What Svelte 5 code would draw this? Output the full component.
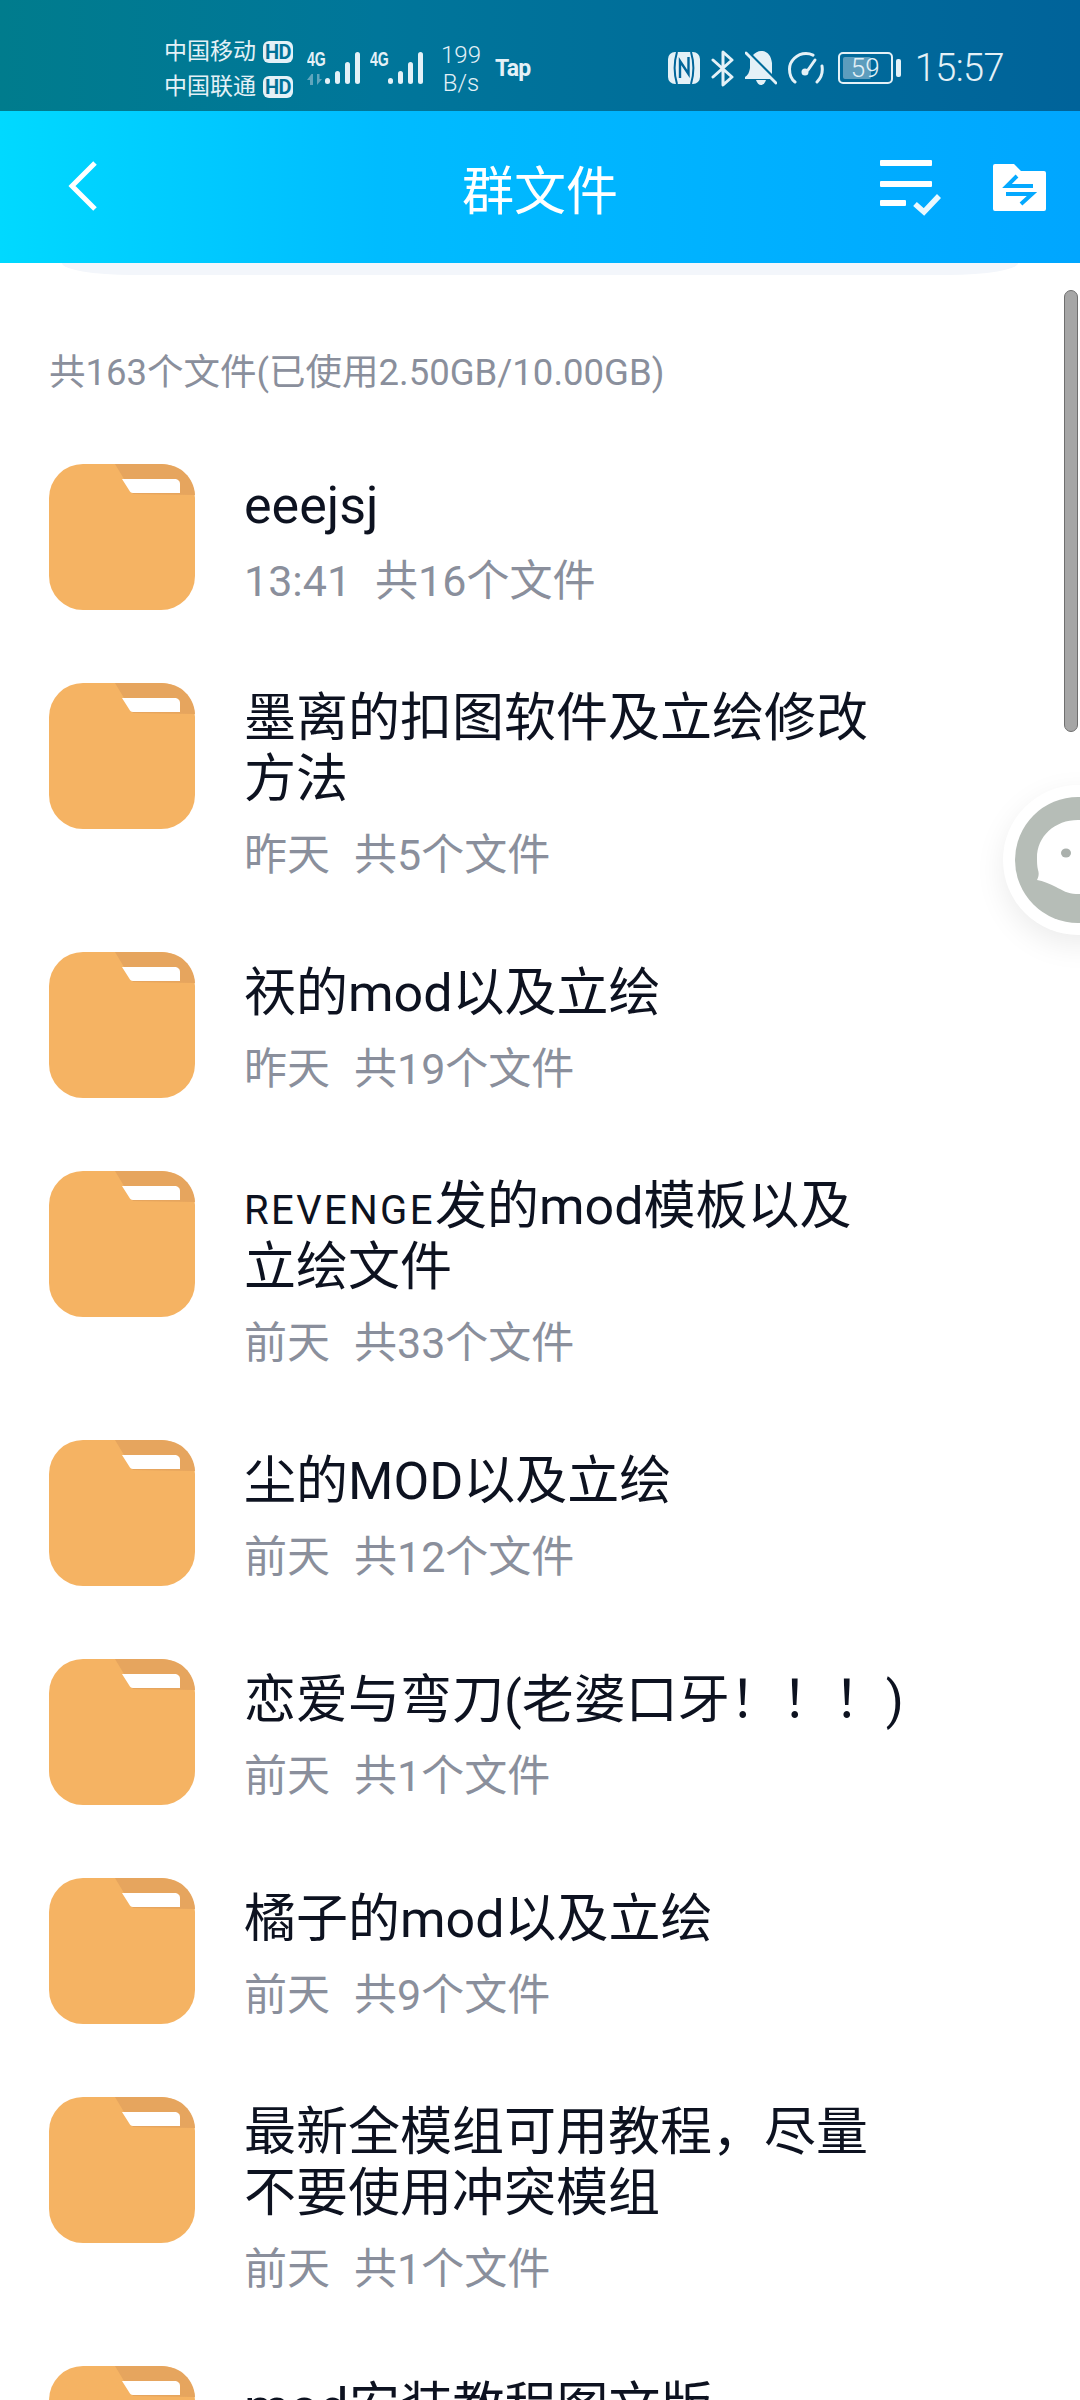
<script>
    const folders = [
        { lines: ['eeejsj'], time: '13:41', count: 16 },
        { lines: ['墨离的扣图软件及立绘修改', '方法'], time: '昨天', count: 5 },
        { lines: ['祆的mod以及立绘'], time: '昨天', count: 19 },
        { lines: ['<small>REVENGE</small>发的mod模板以及', '立绘文件'], time: '前天', count: 33 },
        { lines: ['尘的MOD以及立绘'], time: '前天', count: 12 },
        { lines: ['恋爱与弯刀(老婆口牙！！！)'], time: '前天', count: 1 },
        { lines: ['橘子的mod以及立绘'], time: '前天', count: 9 },
        { lines: ['最新全模组可用教程，尽量', '不要使用冲突模组'], time: '前天', count: 1 },
        { lines: ['mod安装教程图文版'], time: '前天', count: 1 }
    ];
</script>

<div class="page">
    <div class="status">
        <div class="carriers">
            <div class="carrier">中国移动<span class="hd">HD</span></div>
            <div class="carrier">中国联通<span class="hd">HD</span></div>
        </div>
        <div class="signal">
            <span class="net">4G</span>
            <svg class="arrows" width="17" height="11" viewBox="0 0 17 11"><path d="M4.500 0L0 6h3v5h3V0zM10 0v11l5-6h-2.500V0z" fill="#5fa6bd"/></svg>
            <svg class="bars" width="35" height="32" viewBox="0 0 35 32"><g fill="#e4f1f7"><rect x="0" y="26" width="5" height="6" rx="2.500"/><rect x="10" y="19" width="5" height="13" rx="2.500"/><rect x="20" y="10" width="5" height="22" rx="2.500"/><rect x="30" y="0" width="5" height="32" rx="2.500"/></g></svg>
        </div>
        <div class="signal second">
            <span class="net">4G</span>
            <svg class="bars" width="35" height="32" viewBox="0 0 35 32"><g fill="#e4f1f7"><rect x="0" y="26" width="5" height="6" rx="2.500"/><rect x="10" y="19" width="5" height="13" rx="2.500"/><rect x="20" y="10" width="5" height="22" rx="2.500"/><rect x="30" y="0" width="5" height="32" rx="2.500"/></g></svg>
        </div>
        <div class="speed"><span>199</span><span>B/s</span></div>
        <div class="tap">Tap</div>
        <div class="spacer"></div>
        <svg class="ic-nfc" width="32" height="32" viewBox="0 0 32 32">
            <rect width="32" height="32" rx="7" fill="#e4f1f7"/>
            <path d="M9 0C6 10 6 22 9 32M23 0C26 10 26 22 23 32" fill="none" stroke="#00659a" stroke-width="2"/>
            <path d="M12 26V9L20.500 22V5" fill="none" stroke="#00659a" stroke-width="2.400"/>
        </svg>
        <svg class="ic" width="23" height="37" viewBox="0 0 23 37"><path d="M2 10l19 17-9 8V2l9 8L2 27" fill="none" stroke="#e4f1f7" stroke-width="3" stroke-linejoin="round" stroke-linecap="round"/></svg>
        <svg class="ic" width="32" height="34" viewBox="0 0 32 34">
            <path d="M5 7l21 21H0v-2c3-2 4-4 5-9V7zM8 4c2-2 5-4 8-4 7 0 10 5 11 12v11L8 4z" fill="#e4f1f7"/>
            <path d="M1 2l30 30" stroke="#e4f1f7" stroke-width="3" stroke-linecap="round"/>
            <path d="M11 29h10c-1 3-3 5-5 5s-4-2-5-5z" fill="#e4f1f7"/>
        </svg>
        <svg class="ic" width="36" height="32" viewBox="0 0 36 32">
            <path d="M7 30C3 27 1.500 22 1.500 17 1.500 9 9 1.500 18 1.500c3 0 5 .6 7 1.600M34 14c1 6-1 12-5 16" fill="none" stroke="#e4f1f7" stroke-width="3" stroke-linecap="round"/>
            <path d="M27 8L20 18" stroke="#e4f1f7" stroke-width="3" stroke-linecap="round"/>
            <circle cx="17" cy="20" r="3.500" fill="#e4f1f7"/>
        </svg>
        <div class="battery">
            <div class="cell"><div class="fill"></div><span>59</span></div>
            <div class="tip"></div>
        </div>
        <div class="clock">15:57</div>
    </div>

    <div class="header">
        <svg class="back" width="30" height="50" viewBox="0 0 30 50"><path d="M27 2L4 25l23 23" fill="none" stroke="#fff" stroke-width="5"/></svg>
        <div class="title">群文件</div>
        <svg class="check" width="61" height="56" viewBox="0 0 61 56">
            <g fill="#fff"><rect x="0" y="0" width="52" height="6" rx="1"/><rect x="0" y="21" width="52" height="6" rx="1"/><rect x="0" y="40" width="26" height="6" rx="1"/></g>
            <path d="M35 44l9 8 15-16" fill="none" stroke="#fff" stroke-width="5.500" opacity=".92"/>
        </svg>
        <svg class="move" width="53" height="47" viewBox="0 0 53 47">
            <path d="M2 0h19l7 7h23a2 2 0 0 1 2 2v36a2 2 0 0 1-2 2H2a2 2 0 0 1-2-2V2a2 2 0 0 1 2-2z" fill="#fff"/>
            <path d="M40 22H14L24 12M13 30H39L28 40" fill="none" stroke="#04a9ff" stroke-width="4"/>
        </svg>
    </div>
    <div class="arc"></div>

    <div class="summary">共163个文件(已使用2.50GB/10.00GB)</div>

    <div class="list">
        {#each folders as f}
            <div class="row">
                <svg class="folder" width="146" height="146" viewBox="0 0 146 146">
                    <path d="M34 0h78a34 34 0 0 1 34 34v78a34 34 0 0 1-34 34H34A34 34 0 0 1 0 112V34A34 34 0 0 1 34 0z" fill="#f5b363"/>
                    <path d="M66 0h46c20 0 33 14 34 31L84 30z" fill="#e6a55e"/>
                    <path d="M73 15h52c4 0 6 2 6 5v9H84c-2 0-3-1-4-3z" fill="#fff"/>
                </svg>
                <div class="info">
                    <div class="name">{#each f.lines as l}<div class="line">{@html l}</div>{/each}</div>
                    <div class="meta"><span>{f.time}</span><span>共{f.count}个文件</span></div>
                </div>
            </div>
        {/each}
    </div>

    <div class="scrollbar"></div>
    <div class="float">
        <div class="ring">
            <svg width="100" height="100" viewBox="0 0 100 100"><path d="M9 48C9 26 27 10 50 10H100V84H48C40 84 34 80 28 77C22 74 15 71 9 70C11 66 11 63 10 60C9 56 9 52 9 48z" fill="#fff"/><ellipse cx="38" cy="43" rx="5" ry="4.500" fill="#aab0ac"/></svg>
        </div>
    </div>
</div>

<style>
    :global(body) { margin: 0; background: #fff; }
    .page { position: relative; width: 1080px; height: 2400px; overflow: hidden; background: #fff; font-family: Roboto, "Noto Sans CJK SC", sans-serif; }

    .status { height: 111px; box-sizing: border-box; padding: 25px 76px 0 164px; display: flex; align-items: center; background: linear-gradient(90deg, #007c8d, #00769a 35%, #00639a); color: #e4f1f7; }
    .carriers { display: flex; flex-direction: column; gap: 11px; margin-top: 3px; }
    .carrier { font-size: 23px; line-height: 24px; height: 24px; display: flex; align-items: center; }
    .hd { margin-left: 7px; background: #e4f1f7; color: #007096; font-size: 20px; font-weight: 700; border-radius: 6px; width: 30px; height: 22px; line-height: 22px; text-align: center; letter-spacing: -0.5px; }
    .signal { position: relative; width: 50px; height: 32px; margin-left: 14px; margin-top: -1px; }
    .signal.second { margin-left: 13px; width: 53px; }
    .net { position: absolute; left: 0; top: -4px; font-size: 16px; line-height: 17px; font-weight: 700; transform: scale(.88, 1.3); transform-origin: top left; font-family: "Liberation Sans", sans-serif; }
    .arrows { position: absolute; left: 0; top: 22px; }
    .bars { position: absolute; left: 18px; top: 0; }
    .speed { display: flex; flex-direction: column; margin-left: 18px; margin-top: 1px; font-size: 24px; line-height: 28px; font-weight: 300; align-items: center; }
    .tap { margin-left: 14px; font-size: 23px; font-weight: 700; letter-spacing: -0.8px; }
    .spacer { flex: 1; }
    .ic-nfc { display: block; }
    .ic { display: block; margin-left: 11px; }
    .battery { display: flex; align-items: center; margin-left: 14px; }
    .cell { position: relative; box-sizing: border-box; width: 55px; height: 32px; border: 2.500px solid #e4f1f7; border-radius: 5px; display: flex; align-items: center; justify-content: center; font-size: 26px; font-weight: 300; }
    .cell span { position: relative; }
    .fill { position: absolute; left: 3px; top: 3px; bottom: 3px; width: 28px; background: #5d9dbd; border-radius: 2px; }
    .tip { width: 5px; height: 18px; margin-left: 3px; background: #e4f1f7; border-radius: 2px; }
    .clock { margin-left: 14px; font-size: 38px; letter-spacing: -0.6px; font-weight: 300; }

    .header { position: relative; height: 152px; display: flex; align-items: center; background: linear-gradient(90deg, #00d9ff, #00bcff 35%, #00a6ff); }
    .back { margin-left: 68px; margin-top: -2px; }
    .title { position: absolute; left: 0; right: 0; text-align: center; color: #fff; font-size: 52px; }
    .check { position: relative; margin-left: auto; margin-top: 2px; }
    .move { position: relative; margin-left: 52px; margin-right: 34px; margin-top: 1px; }
    .arc { height: 12px; margin: 0 62px; background: #f3f6fb; border-radius: 0 0 70px 70px / 0 0 12px 12px; }

    .summary { margin: 73px 0 0 49px; color: #8a8f9c; font-size: 36.500px; line-height: 50px; }

    .list { margin-top: 66px; display: flex; flex-direction: column; gap: 73px; padding: 0 49px; }
    .row { display: flex; gap: 49px; align-items: flex-start; }
    .folder { flex-shrink: 0; display: block; }
    .info { box-sizing: border-box; min-width: 0; min-height: 146px; padding: 5px 0 0; display: flex; flex-direction: column; justify-content: center; }
    .name { color: #0d1220; font-size: 52px; line-height: 61px; }
    .line { height: 61px; }
    .name :global(small) { font-size: 40px; letter-spacing: 2.400px; line-height: 1; }
    .meta { display: flex; gap: 24px; margin-top: 21px; color: #8a8f9c; font-size: 43px; line-height: 48px; }

    .scrollbar { position: absolute; left: 1064px; top: 290px; width: 14px; height: 442px; box-sizing: border-box; background: #a6a6a6; border: 1.500px solid #6f6f6f; border-radius: 7px; }
    .float { position: absolute; left: 1003px; top: 785px; width: 150px; height: 150px; box-sizing: border-box; padding: 12px; background: #fff; border-radius: 50%; box-shadow: 0 10px 30px rgba(0,0,0,0.08); }
    .ring { width: 126px; height: 126px; background: #b6bdb7; border-radius: 50%; display: flex; align-items: center; justify-content: center; }
</style>
